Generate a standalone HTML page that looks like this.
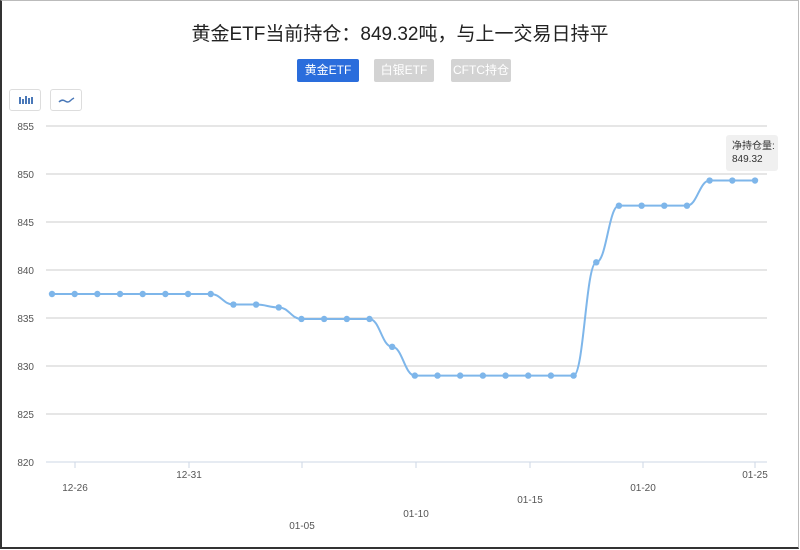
<!DOCTYPE html>
<html><head><meta charset="utf-8"><style>
html,body{margin:0;padding:0;background:#fff}
#w{position:relative;width:796px;height:546px;border:2px solid #333;border-top:1px solid #bbb;border-right:1px solid #bbb;overflow:hidden;font-family:"Liberation Sans","Noto Sans CJK SC",sans-serif}
.t{position:absolute;top:18px;left:0;width:796px;text-align:center;font-size:19px;color:#222}
.b{position:absolute;top:58px;height:23px;line-height:23px;font-size:12px;color:#fff;text-align:center;border-radius:2px}
.ic{position:absolute;top:88px;width:30px;height:20px;border:1px solid #ddd;border-radius:3px}
</style></head><body><div id="w">
<div class="t">黄金ETF当前持仓：849.32吨，与上一交易日持平</div>
<div class="b" style="left:295px;width:62px;background:#2a6ddc">黄金ETF</div>
<div class="b" style="left:372px;width:60px;background:#d3d3d3">白银ETF</div>
<div class="b" style="left:449px;width:60px;background:#d3d3d3">CFTC持仓</div>
<div class="ic" style="left:7px"><svg width="30" height="20"><g fill="#4a78b8"><rect x="9" y="7" width="2" height="7"/><rect x="12" y="9" width="2" height="5"/><rect x="15" y="6" width="2" height="8"/><rect x="18" y="8" width="2" height="6"/><rect x="21" y="7" width="2" height="7"/></g></svg></div>
<div class="ic" style="left:48px"><svg width="30" height="20"><path d="M8 12 Q11 9 14 11 T19 11 T23 8" stroke="#4a78b8" stroke-width="1.5" fill="none"/></svg></div>
<svg id="c" width="796" height="546" style="position:absolute;left:0;top:0" font-family="Liberation Sans,sans-serif" font-size="10" fill="#555"></svg>
<div style="position:absolute;left:724px;top:134px;width:52px;height:36px;background:#f0f0f0;border-radius:3px;font-size:10px;color:#333;padding:5px 0 0 6px;box-sizing:border-box;line-height:13px;font-family:'Liberation Sans','Noto Sans CJK SC',sans-serif">净持仓量:<br>849.32</div>
</div>
<script>
var s='',ox=-2,oy=-1;
var g=[855,850,845,840,835,830,825,820];
g.forEach(function(v,i){var y=126+i*48+oy;s+='<line x1="44" x2="765" y1="'+y+'" y2="'+y+'" stroke="'+(i==7?'#cdd7e6':'#ccc')+'"/>';s+='<text x="'+(34+ox)+'" y="'+(y+4)+'" text-anchor="end">'+v+'</text>';});
var labs=[[75,488,'12-26'],[189,475,'12-31'],[302,526,'01-05'],[416,514,'01-10'],[530,500,'01-15'],[643,488,'01-20'],[755,475,'01-25']];
labs.forEach(function(l){s+='<line x1="'+(l[0]+ox)+'" x2="'+(l[0]+ox)+'" y1="'+(462+oy)+'" y2="'+(468+oy)+'" stroke="#cdd7e6"/><text x="'+(l[0]+ox)+'" y="'+(l[1]+oy+3)+'" text-anchor="middle">'+l[2]+'</text>';});
var v=[837.5,837.5,837.5,837.5,837.5,837.5,837.5,837.5,836.4,836.4,836.1,834.9,834.9,834.9,834.9,832,829,829,829,829,829,829,829,829,840.8,846.7,846.7,846.7,846.7,849.32,849.32,849.32];
var p=v.map(function(a,i){return [52+i*(703/31)+ox,126+(855-a)*9.6+oy];});
var d='M'+p[0][0]+' '+p[0][1];
for(var i=1;i<p.length;i++){var a=p[i-1],b=p[i],h=(b[0]-a[0])*0.45;d+=' C'+(a[0]+h)+' '+a[1]+' '+(b[0]-h)+' '+b[1]+' '+b[0]+' '+b[1];}
s+='<path d="'+d+'" stroke="#7eb6ea" stroke-width="2" fill="none"/>';
p.forEach(function(q){s+='<circle cx="'+q[0]+'" cy="'+q[1]+'" r="3.2" fill="#7eb6ea"/>';});
document.getElementById('c').innerHTML=s;
</script>
</body></html>
